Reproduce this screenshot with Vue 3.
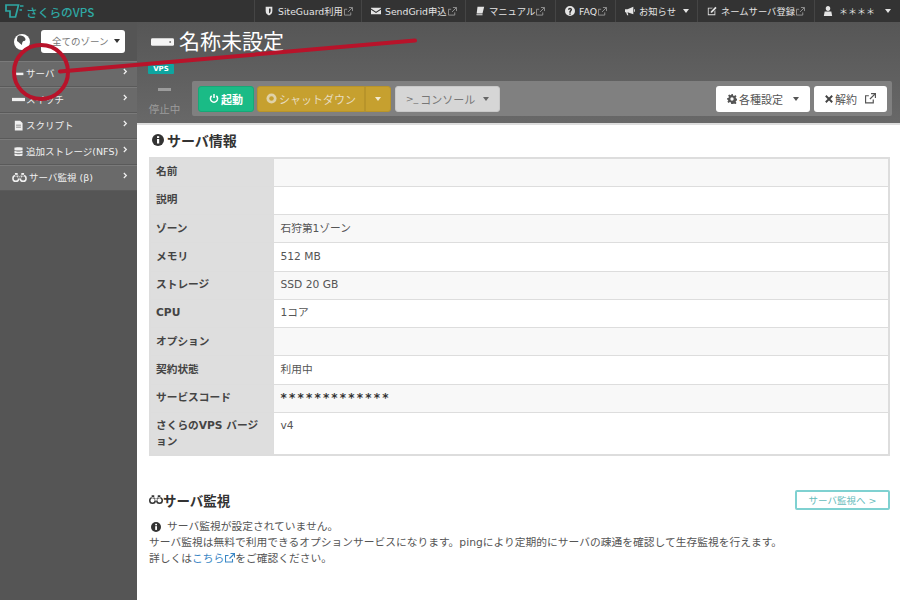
<script setup>
const topItems = [
  { icon: 'shield', label: 'SiteGuard利用', ext: true, width: 107 },
  { icon: 'mail', label: 'SendGrid申込', ext: true, width: 104 },
  { icon: 'book', label: 'マニュアル', ext: true, width: 90 },
  { icon: 'help', label: 'FAQ', ext: true, width: 60 },
  { icon: 'horn', label: 'お知らせ', caret: true, width: 82 },
  { icon: 'edit', label: 'ネームサーバ登録', ext: true, width: 117 },
  { icon: 'user', label: '＊＊＊＊', caret: true, wide: true, width: 86 }
]
const navItems = [
  { icon: 'server', label: 'サーバ' },
  { icon: 'switch', label: 'スイッチ' },
  { icon: 'script', label: 'スクリプト' },
  { icon: 'db', label: '追加ストレージ(NFS)' },
  { icon: 'bino', label: 'サーバ監視 (β)' }
]
const rows = [
  ['名前', ''],
  ['説明', ''],
  ['ゾーン', '石狩第1ゾーン'],
  ['メモリ', '512 MB'],
  ['ストレージ', 'SSD 20 GB'],
  ['CPU', '1コア'],
  ['オプション', ''],
  ['契約状態', '利用中'],
  ['サービスコード', '*************'],
  ['さくらのVPS バージョン', 'v4']
]
</script>

<template>
  <div class="page">
    <header class="topbar">
      <div class="logo">
        <svg class="logo-mark" viewBox="0 0 19 14" width="19" height="14" fill="none" stroke="#2fa8a4" stroke-width="1.700">
          <path d="M1 1h12.500L10.500 13H5V7H1z" />
          <path d="M15 2h3.500M14.500 6h2.500" />
        </svg>
        <span>さくらのVPS</span>
      </div>
      <nav class="topnav">
        <a v-for="item in topItems" :key="item.label" class="topitem" :class="{ wide: item.wide }" :style="{ width: item.width + 'px' }">
          <svg class="ti" viewBox="0 0 12 12" width="10" height="10" fill="#e4e4e4">
            <path v-if="item.icon === 'shield'" d="M2 1h8v5c0 3-2 4.500-4 5.500C4 10.500 2 9 2 6zM6 3v6c1-.6 2-1.500 2-3V3z" fill-rule="evenodd" />
            <path v-else-if="item.icon === 'mail'" d="M0 2h12v1L6 7 0 3zM0 4.500 6 8.500l6-4V10H0z" />
            <path v-else-if="item.icon === 'book'" d="M3 1h8l-2 8H2zM1.500 10h7.500v1H2z" />
            <path v-else-if="item.icon === 'help'" d="M6 0a6 6 0 1 0 0 12A6 6 0 0 0 6 0zM5 9h2v1.500H5zM3.500 4.500C3.500 3 4.700 2 6 2s2.500.9 2.500 2.300C8.500 6 7 6 7 8H5c0-2.500 1.500-2.500 1.500-3.700 0-.8-1-.8-1 .2z" fill-rule="evenodd" />
            <path v-else-if="item.icon === 'horn'" d="M0 4h3l7-3v9L3 7.500 4 11H2.500L1.300 7.500H0zM11 4h1v3h-1z" />
            <path v-else-if="item.icon === 'edit'" d="M1 2h6L6 3H2v7h7V6l1-1v6H1zM10 1l1.500 1.500L6 8H4.500V6.500z" />
            <path v-else d="M6 0c1.700 0 2.700 1.300 2.700 3S7.700 6 6 6 3.300 4.700 3.300 3 4.300 0 6 0zM2 6.500h8L11 12H1z" />
          </svg>
          <span class="tl">{{ item.label }}</span>
          <svg v-if="item.ext" class="ext" viewBox="0 0 10 10" width="9" height="9" fill="none" stroke="#9a9a9a" stroke-width="1">
            <path d="M7.500 6v3h-7V2.500h3M5.500.5h4v4M9 1 4.500 5.500" />
          </svg>
          <span v-if="item.caret" class="caret small"></span>
        </a>
      </nav>
    </header>

    <div class="body">
      <aside class="side">
        <div class="zone">
          <svg viewBox="0 0 16 16" width="16" height="16">
            <circle cx="8" cy="8" r="8" fill="#fff" />
            <path d="M4 2c3-1 6 0 7 2 1 1 .5 3-1 3S8 9 8 11C6 10 5 8 3 7c0-2 0-4 1-5z" fill="#4d4d4d" />
          </svg>
          <div class="zone-select"><span>全てのゾーン</span><span class="caret dark"></span></div>
        </div>
        <ul class="nav">
          <li v-for="n in navItems" :key="n.label" class="nav-item">
            <svg class="ni" :class="{ bino: n.icon === 'bino' }" viewBox="0 0 16 12" fill="#f0f0f0">
              <path v-if="n.icon === 'server'" d="M2 5h12v3H2z" />
              <path v-else-if="n.icon === 'switch'" d="M0 4h16v4H0z" />
              <path v-else-if="n.icon === 'script'" d="M3.500 0H10l3 3v9H3.500zM5 5v1h6V5zM5 7.500v1h6v-1z" fill-rule="evenodd" />
              <path v-else-if="n.icon === 'db'" d="M3 1.500C3 .5 13 .5 13 1.500V4C13 5 3 5 3 4zM3 5c2 1.200 8 1.200 10 0v2.500c0 1-10 1-10 0zM3 8.500c2 1.200 8 1.200 10 0v2c0 1.500-10 1.500-10 0z" />
              <path v-else d="M4 3a4 4 0 1 0 0 8 4 4 0 0 0 0-8zm0 1.700a2.300 2.300 0 1 1 0 4.600 2.300 2.300 0 0 1 0-4.600zM12 3a4 4 0 1 0 0 8 4 4 0 0 0 0-8zm0 1.700a2.300 2.300 0 1 1 0 4.600 2.300 2.300 0 0 1 0-4.600zM3 1h3v3H3zM10 1h3v3h-3zM6.500 4.500h3V7h-3z" fill-rule="evenodd" />
            </svg>
            <span class="nl">{{ n.label }}</span>
            <svg class="chev" viewBox="0 0 6 8" width="5" height="7" fill="none" stroke="#f0f0f0" stroke-width="1.500"><path d="M1 1l3 3-3 3" /></svg>
          </li>
        </ul>
      </aside>

      <main class="main">
        <section class="head">
          <div class="title">
            <svg viewBox="0 0 24 8" width="23" height="8">
              <rect width="24" height="8" rx="1.500" fill="#f4f4f4" />
              <circle cx="20" cy="4" r="1" fill="#777" />
            </svg>
            <h1>名称未設定</h1>
          </div>
          <div class="vps">VPS</div>
          <div class="actions">
            <div class="status">
              <div class="status-dash"></div>
              <div>停止中</div>
            </div>
            <div class="toolbar">
              <button class="btn start">
                <svg viewBox="0 0 12 12" width="10" height="11" fill="none" stroke="#fff" stroke-width="1.800"><path d="M3.200 2.800a4.300 4.300 0 1 0 5.600 0M6 .5v5" /></svg>
                起動
              </button>
              <div class="split">
                <button class="btn warn main-part">
                  <svg viewBox="0 0 12 12" width="11" height="11"><circle cx="6" cy="6" r="5.500" fill="#e0d2a8" /><circle cx="6" cy="6" r="2.500" fill="#c6a02f" /></svg>
                  シャットダウン
                </button>
                <button class="btn warn caret-part"><span class="caret light"></span></button>
              </div>
              <button class="btn console"><span class="prompt">&gt;_</span>コンソール<span class="caret grey"></span></button>
              <div class="spacer"></div>
              <button class="btn white wsettings">
                <svg viewBox="0 0 12 12" width="10" height="10" fill="#555"><path d="M5 0h2l.3 1.700 1.300.6L10 1.300l1.400 1.400-1 1.500.6 1.300 1.700.3v2l-1.700.3-.6 1.300 1 1.500-1.400 1.400-1.500-1-1.300.6L7 12H5l-.3-1.700-1.300-.6-1.500 1L.5 9.300l1-1.500-.6-1.300L0 7V5l1.700-.3.600-1.300-1-1.500L2.700.5l1.500 1 1.300-.6zM6 4a2 2 0 1 0 0 4 2 2 0 0 0 0-4z" fill-rule="evenodd" /></svg>
                各種設定<span class="caret grey2"></span>
              </button>
              <button class="btn white wcancel">
                <svg viewBox="0 0 10 10" width="8" height="8" stroke="#444" stroke-width="2.400"><path d="M1 1l8 8M9 1l-8 8" /></svg>
                解約
                <svg class="ext-big" viewBox="0 0 10 10" width="11" height="11" fill="none" stroke="#555" stroke-width="1.100"><path d="M7.500 6v3h-7V2.500h3M5.500.5h4v4M9 1 4.500 5.500" /></svg>
              </button>
            </div>
          </div>
        </section>

        <section class="content">
          <h2 class="sec-title">
            <svg viewBox="0 0 12 12" width="12" height="12"><circle cx="6" cy="6" r="6" fill="#333" /><rect x="5" y="5" width="2.200" height="4.500" fill="#fff" /><rect x="5" y="2.200" width="2.200" height="1.800" fill="#fff" /></svg>
            サーバ情報
          </h2>
          <table class="info">
            <tbody>
              <tr v-for="r in rows" :key="r[0]">
                <th>{{ r[0] }}</th>
                <td>{{ r[1] }}</td>
              </tr>
            </tbody>
          </table>

          <div class="mon-head">
            <h2 class="sec-title mon">
              <svg viewBox="0 0 16 12" width="14" height="11" fill="#333"><path d="M4 3a4 4 0 1 0 0 8 4 4 0 0 0 0-8zm0 1.700a2.300 2.300 0 1 1 0 4.600 2.300 2.300 0 0 1 0-4.600zM12 3a4 4 0 1 0 0 8 4 4 0 0 0 0-8zm0 1.700a2.300 2.300 0 1 1 0 4.600 2.300 2.300 0 0 1 0-4.600zM3 1h3v3H3zM10 1h3v3h-3zM6.500 4.500h3V7h-3z" fill-rule="evenodd" /></svg>
              サーバ監視
            </h2>
            <button class="mon-btn">サーバ監視へ &gt;</button>
          </div>
          <div class="mon-text">
            <p class="note">
              <svg viewBox="0 0 12 12" width="10" height="10"><circle cx="6" cy="6" r="6" fill="#333" /><rect x="5" y="5" width="2.200" height="4.500" fill="#fff" /><rect x="5" y="2.200" width="2.200" height="1.800" fill="#fff" /></svg>
              サーバ監視が設定されていません。
            </p>
            <p>サーバ監視は無料で利用できるオプションサービスになります。pingにより定期的にサーバの疎通を確認して生存監視を行えます。</p>
            <p>詳しくは<a class="link">こちら<svg viewBox="0 0 10 10" width="10" height="10" fill="none" stroke="#3a86c4" stroke-width="1.100"><path d="M7.500 6v3h-7V2.500h3M5.500.5h4v4M9 1 4.500 5.500" /></svg></a>をご確認ください。</p>
          </div>
        </section>
      </main>
    </div>

    <svg class="annot" viewBox="0 0 900 600" width="900" height="600" fill="none" stroke="#b8132a">
      <circle cx="41" cy="72" r="27" stroke-width="4" />
      <path d="M60 71.500 415 40.500" stroke-width="4" stroke-linecap="round" />
    </svg>
  </div>
</template>

<style>
html, body { margin: 0; background: #fff; }
</style>

<style scoped>
.page {
  position: relative;
  width: 900px;
  height: 600px;
  overflow: hidden;
  font-family: "DejaVu Sans", "Noto Sans CJK JP", sans-serif;
  font-size: 11px;
  color: #444;
}
.topbar {
  height: 22px;
  background: #333;
  display: flex;
  justify-content: space-between;
  align-items: stretch;
}
.logo {
  display: flex;
  align-items: center;
  gap: 2px;
  padding-left: 5px;
  color: #2fa8a4;
  font-family: "Noto Sans CJK JP", sans-serif;
  font-size: 11.700px;
  font-weight: 500;
}
.topnav { display: flex; }
.topitem {
  display: flex;
  align-items: center;
  gap: 4px;
  box-sizing: border-box;
  padding-left: 9px;
  border-left: 1px solid #454545;
  color: #e4e4e4;
  font-size: 9.300px;
  white-space: nowrap;
}
.topitem.wide { gap: 6px; padding-left: 8px; }
.topitem.wide .tl { font-size: 9px; }
.ext { margin-left: -3px; }
.caret {
  display: inline-block;
  width: 0;
  height: 0;
  border-left: 3.500px solid transparent;
  border-right: 3.500px solid transparent;
  border-top: 4px solid #e4e4e4;
}
.caret.small { margin-left: 3px; }
.topitem.wide .caret { margin-left: 4px; }
.caret.dark { border-top-color: #333; }
.caret.light { border-top-color: #f2ead0; }
.caret.grey { border-top-color: #666; margin-left: 6px; }
.caret.grey2 { border-top-color: #555; margin-left: 8px; }

.body { display: flex; height: 578px; }
.side { width: 137px; flex: none; background: #555; }
.zone {
  height: 39px;
  box-sizing: border-box;
  display: flex;
  align-items: center;
  gap: 11px;
  padding: 0 12px 0 14px;
}
.zone-select {
  width: 84px;
  height: 23px;
  box-sizing: border-box;
  margin-top: -1px;
  background: #fff;
  border-radius: 3px;
  display: flex;
  align-items: center;
  justify-content: space-between;
  padding: 0 5px 0 11px;
  font-size: 9.500px;
  color: #777;
}
.nav { list-style: none; margin: 0; padding: 0; }
.nav-item {
  height: 26px;
  box-sizing: border-box;
  background: #6a6a6a;
  border-top: 1px solid #7a7a7a;
  border-bottom: 1px solid #5a5a5a;
  display: flex;
  align-items: center;
  padding: 0 9px 2px 12px;
  color: #f0f0f0;
}
.ni { width: 13px; height: 11px; flex: none; margin-right: 1px; }
.ni.bino { width: 15px; margin-right: 2px; }
.nl { flex: 1; white-space: nowrap; font-size: 9.500px; }
.chev { margin-top: -3px; }

.main { flex: 1; min-width: 0; }
.head {
  height: 103px;
  box-sizing: border-box;
  background: linear-gradient(#565656, #686868);
  border-bottom: 2px solid #ddd;
  padding-top: 7px;
}
.title { display: flex; align-items: center; gap: 5px; padding-left: 14px; height: 26px; }
.title h1 {
  margin: 0;
  font-size: 21px;
  font-weight: 400;
  color: #fff;
  line-height: 26px;
}
.vps {
  width: 26px;
  height: 10px;
  margin: 9px 0 0 11px;
  background: #0fa5a0;
  border-radius: 1px;
  color: #fff;
  font-size: 7px;
  font-weight: 700;
  line-height: 10px;
  text-align: center;
}
.actions { display: flex; margin-top: 7px; }
.status {
  width: 55px;
  flex: none;
  text-align: center;
  color: #9c9c9c;
  font-size: 10.500px;
  padding-top: 4px;
  line-height: 14px;
}
.status-dash { width: 13px; height: 3px; background: #9c9c9c; margin: 3px auto 11px; }
.toolbar {
  width: 700px;
  height: 35px;
  box-sizing: border-box;
  background: #808080;
  border-radius: 2px;
  display: flex;
  align-items: center;
  padding: 0 5px 0 6px;
}
.spacer { flex: 1; }
.btn {
  height: 26px;
  box-sizing: border-box;
  border: 1px solid transparent;
  border-radius: 3px;
  font: inherit;
  font-size: 11px;
  padding: 0;
  display: flex;
  align-items: center;
  justify-content: center;
  gap: 2px;
  white-space: nowrap;
}
.start { width: 56px; background: #1abb86; color: #fff; font-weight: 700; border-color: #17a877; margin-right: 3px; }
.split { display: flex; margin-right: 4px; }
.warn { background: #c6a02f; color: #e6dcc0; border-color: #b8942a; }
.main-part { width: 108px; border-radius: 3px 0 0 3px; }
.caret-part { width: 26px; border-radius: 0 3px 3px 0; }
.console { width: 105px; background: #d6d6d6; color: #777; border-color: #c8c8c8; }
.prompt { font-size: 9.500px; }
.white { background: #fff; color: #555; }
.wsettings { width: 94px; margin-right: 4px; }
.wcancel { width: 73px; }
.ext-big { margin-left: 6px; }

.content { padding: 0 10px 0 12px; }
.sec-title {
  margin: 0;
  display: flex;
  align-items: center;
  gap: 3px;
  height: 32px;
  box-sizing: border-box;
  padding: 0 0 2px 3px;
  font-size: 14px;
  font-weight: 700;
  color: #333;
}
.info {
  width: 741px;
  border-collapse: collapse;
  border: 2px solid #ddd;
  table-layout: fixed;
  color: #555;
}
.info th, .info td {
  height: 28.250px;
  box-sizing: border-box;
  padding: 0 7px;
  border: 1px solid #ddd;
  font-size: 10.700px;
  line-height: 16px;
  text-align: left;
  vertical-align: middle;
}
.info th { width: 123px; padding-left: 5px; padding-right: 5px; background: #dedede; font-weight: 700; color: #444; }
.info tr:nth-child(odd) td { background: #f8f8f8; }
.info tr:last-child th { height: 43px; padding-top: 3px; padding-bottom: 3px; }
.info tr:last-child td { vertical-align: top; padding-top: 5px; }
.info tr:nth-child(9) td { font-size: 12px; font-weight: 700; letter-spacing: 2.200px; color: #333; }

.mon-head {
  display: flex;
  justify-content: space-between;
  align-items: center;
  margin-top: 27px;
  width: 741px;
}
.sec-title.mon { padding: 0; gap: 0; height: 33px; font-size: 13.500px; }
.mon-btn {
  width: 95px;
  height: 20px;
  box-sizing: border-box;
  background: #fff;
  border: 2px solid #7fd1d1;
  border-radius: 2px;
  color: #66bcbc;
  font: inherit;
  font-size: 9.500px;
  padding: 0;
}
.mon-text { margin-top: 3px; font-size: 10.750px; color: #555; line-height: 16px; }
.mon-text p { margin: 0; white-space: nowrap; }
.note { display: flex; align-items: center; gap: 6px; padding-left: 2px; }
.link { color: #3a86c4; }
.link svg { vertical-align: -1px; margin-left: 1px; }

.annot { position: absolute; left: 0; top: 0; pointer-events: none; }
</style>
